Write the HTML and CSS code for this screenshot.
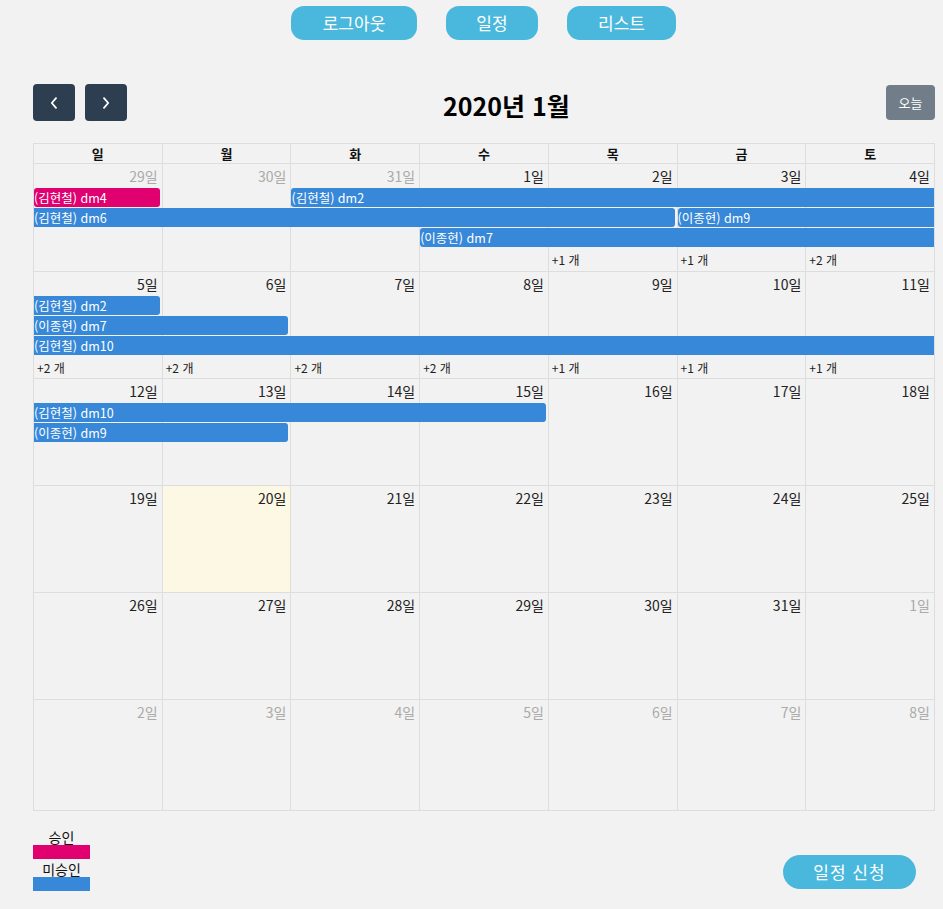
FILE: index.html
```html
<!DOCTYPE html>
<html lang="ko">
<head>
<meta charset="utf-8">
<title>일정</title>
<link rel="stylesheet" href="styles.css">
</head>
<body>
<nav class="topnav">
  <button class="pill nav-logout">로그아웃</button>
  <button class="pill nav-schedule">일정</button>
  <button class="pill nav-list">리스트</button>
</nav>

<div class="calendar">
  <div class="toolbar">
    <div class="nav-group">
      <button class="nav-btn" aria-label="prev"><svg width="8" height="12" viewBox="0 0 8 12"><path d="M6 1.2 L1.8 6 L6 10.8" stroke="#fff" stroke-width="1.8" fill="none" stroke-linecap="round" stroke-linejoin="round"/></svg></button>
      <button class="nav-btn" aria-label="next"><svg width="8" height="12" viewBox="0 0 8 12"><path d="M2 1.2 L6.2 6 L2 10.8" stroke="#fff" stroke-width="1.8" fill="none" stroke-linecap="round" stroke-linejoin="round"/></svg></button>
    </div>
    <h2 class="title">2020년 1월</h2>
    <button class="today-btn">오늘</button>
  </div>

  <div class="grid">
    <div class="head">
      <div>일</div><div>월</div><div>화</div><div>수</div><div>목</div><div>금</div><div>토</div>
    </div>
    <div class="body">
      <!-- week 1 -->
      <div class="week">
        <div class="bg"><div></div><div></div><div></div><div></div><div></div><div></div><div></div></div>
        <div class="content">
          <div class="num other">29일</div><div class="num other">30일</div><div class="num other">31일</div><div class="num">1일</div><div class="num">2일</div><div class="num">3일</div><div class="num">4일</div>
          <div class="ev pink r1 c1 w1">(김현철) dm4</div>
          <div class="ev r1 c3 w5 cont-r">(김현철) dm2</div>
          <div class="ev r2 c1 w5 cont-l">(김현철) dm6</div>
          <div class="ev r2 c6 w2 cont-r">(이종현) dm9</div>
          <div class="ev r3 c4 w4 cont-r">(이종현) dm7</div>
          <div class="more c5">+1 개</div>
          <div class="more c6">+1 개</div>
          <div class="more c7">+2 개</div>
        </div>
      </div>
      <!-- week 2 -->
      <div class="week">
        <div class="bg"><div></div><div></div><div></div><div></div><div></div><div></div><div></div></div>
        <div class="content">
          <div class="num">5일</div><div class="num">6일</div><div class="num">7일</div><div class="num">8일</div><div class="num">9일</div><div class="num">10일</div><div class="num">11일</div>
          <div class="ev r1 c1 w1 cont-l">(김현철) dm2</div>
          <div class="ev r2 c1 w2 cont-l">(이종현) dm7</div>
          <div class="ev r3 c1 w7 cont-l cont-r">(김현철) dm10</div>
          <div class="more c1">+2 개</div>
          <div class="more c2">+2 개</div>
          <div class="more c3">+2 개</div>
          <div class="more c4">+2 개</div>
          <div class="more c5">+1 개</div>
          <div class="more c6">+1 개</div>
          <div class="more c7">+1 개</div>
        </div>
      </div>
      <!-- week 3 -->
      <div class="week">
        <div class="bg"><div></div><div></div><div></div><div></div><div></div><div></div><div></div></div>
        <div class="content">
          <div class="num">12일</div><div class="num">13일</div><div class="num">14일</div><div class="num">15일</div><div class="num">16일</div><div class="num">17일</div><div class="num">18일</div>
          <div class="ev r1 c1 w4 cont-l">(김현철) dm10</div>
          <div class="ev r2 c1 w2 cont-l">(이종현) dm9</div>
        </div>
      </div>
      <!-- week 4 -->
      <div class="week">
        <div class="bg"><div></div><div class="today"></div><div></div><div></div><div></div><div></div><div></div></div>
        <div class="content">
          <div class="num">19일</div><div class="num">20일</div><div class="num">21일</div><div class="num">22일</div><div class="num">23일</div><div class="num">24일</div><div class="num">25일</div>
        </div>
      </div>
      <!-- week 5 -->
      <div class="week">
        <div class="bg"><div></div><div></div><div></div><div></div><div></div><div></div><div></div></div>
        <div class="content">
          <div class="num">26일</div><div class="num">27일</div><div class="num">28일</div><div class="num">29일</div><div class="num">30일</div><div class="num">31일</div><div class="num other">1일</div>
        </div>
      </div>
      <!-- week 6 -->
      <div class="week">
        <div class="bg"><div></div><div></div><div></div><div></div><div></div><div></div><div></div></div>
        <div class="content">
          <div class="num other">2일</div><div class="num other">3일</div><div class="num other">4일</div><div class="num other">5일</div><div class="num other">6일</div><div class="num other">7일</div><div class="num other">8일</div>
        </div>
      </div>
    </div>
  </div>
</div>

<footer class="bottom">
  <div class="legend">
    <div class="legend-label">승인</div>
    <div class="legend-bar pink-bar"></div>
    <div class="legend-label">미승인</div>
    <div class="legend-bar blue-bar"></div>
  </div>
  <button class="pill apply">일정 신청</button>
</footer>
</body>
</html>
```

FILE: styles.css
```css
* { box-sizing: border-box; }

body {
  margin: 0;
  background: #f2f2f2;
  font-family: "Noto Sans CJK KR", "Noto Sans", sans-serif;
  color: #222;
}

button {
  font-family: inherit;
  border: none;
  cursor: pointer;
}

/* top navigation */
.topnav {
  display: flex;
  justify-content: center;
  gap: 29px;
  padding: 6px 0 0 24px;
}

.pill {
  height: 34px;
  padding: 0;
  background: #4ab8dc;
  color: #fff;
  font-size: 17px;
  line-height: 34px;
  border-radius: 13px;
  text-align: center;
}

.nav-logout { width: 126px; }
.nav-schedule { width: 92px; }
.nav-list { width: 109px; }

/* calendar */
.calendar {
  margin: 44px 8px 0 33px;
}

.toolbar {
  display: flex;
  align-items: center;
  margin-bottom: 22px;
}

.nav-group {
  display: flex;
  gap: 10px;
}

.nav-btn {
  width: 42px;
  height: 37px;
  background: #2c3e50;
  border-radius: 4px;
  display: flex;
  align-items: center;
  justify-content: center;
  padding: 0;
}

.title {
  flex: 1;
  margin: 0;
  text-align: center;
  font-size: 25px;
  font-weight: bold;
  color: #000;
  line-height: 30px;
  padding-top: 4px;
}

.today-btn {
  width: 49px;
  height: 35px;
  background: #717d89;
  color: #fff;
  font-size: 13px;
  border-radius: 4px;
  padding: 0;
}

.grid {
  border-top: 1px solid #ddd;
  border-right: 1px solid #ddd;
  border-bottom: 1px solid #ddd;
}

.head {
  display: grid;
  grid-template-columns: repeat(7, 1fr);
  border-bottom: 1px solid #ddd;
}

.head > div {
  border-left: 1px solid #ddd;
  height: 19px;
  line-height: 19px;
  text-align: center;
  font-size: 13px;
  font-weight: bold;
  color: #111;
}

.body {
  display: grid;
  grid-template-rows: 108px 107px 107px 107px 107px 1fr;
  height: 646px;
}

.week {
  display: grid;
  border-bottom: 1px solid #ddd;
  min-height: 0;
}

.week:last-child {
  border-bottom: none;
}

.week > .bg,
.week > .content {
  grid-area: 1 / 1;
}

.bg {
  display: grid;
  grid-template-columns: repeat(7, 1fr);
}

.bg > div {
  border-left: 1px solid #ddd;
}

.bg > .today {
  background: #fcf8e3;
}

.content {
  display: grid;
  grid-template-columns: repeat(7, 1fr);
  grid-template-rows: 23px 20px 20px 20px 1fr;
  min-width: 0;
}

.num {
  grid-row: 1;
  text-align: right;
  padding: 2px 4px 0 0;
  font-size: 14px;
  line-height: 20px;
  color: #222;
}

.num.other {
  color: #aaa;
}

.ev {
  height: 19px;
  margin: 1px 2px 0 1px;
  background: #3788d8;
  color: #fff;
  font-size: 12.5px;
  line-height: 19px;
  white-space: nowrap;
  overflow: hidden;
  border-radius: 3px;
  min-width: 0;
}

.ev.pink { background: #e00070; }
.ev.cont-r { margin-right: 0; border-top-right-radius: 0; border-bottom-right-radius: 0; }
.ev.cont-l { border-top-left-radius: 0; border-bottom-left-radius: 0; }

.r1 { grid-row: 2; }
.r2 { grid-row: 3; }
.r3 { grid-row: 4; }

.c1 { grid-column-start: 1; }
.c2 { grid-column-start: 2; }
.c3 { grid-column-start: 3; }
.c4 { grid-column-start: 4; }
.c5 { grid-column-start: 5; }
.c6 { grid-column-start: 6; }
.c7 { grid-column-start: 7; }

.w1 { grid-column-end: span 1; }
.w2 { grid-column-end: span 2; }
.w4 { grid-column-end: span 4; }
.w5 { grid-column-end: span 5; }
.w7 { grid-column-end: span 7; }

.more {
  grid-row: 5;
  font-size: 12px;
  line-height: 20px;
  padding: 3px 0 0 4px;
  color: #222;
}

/* footer */
.bottom {
  display: flex;
  justify-content: space-between;
  align-items: flex-start;
  padding: 18px 27px 0 33px;
}

.legend {
  width: 57px;
  display: flex;
  flex-direction: column;
}

.legend-label {
  text-align: center;
  font-size: 14px;
  line-height: 16px;
  color: #111;
}

.legend-bar {
  height: 14px;
  margin-bottom: 2px;
}

.pink-bar { background: #e00070; }
.blue-bar { background: #3788d8; }

.apply {
  margin-top: 26px;
  width: 133px;
  border-radius: 17px;
  letter-spacing: 1px;
}
```
